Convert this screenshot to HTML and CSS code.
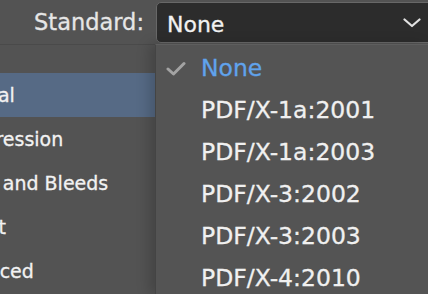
FILE: index.html
```html
<!DOCTYPE html>
<html lang="en">
<head>
    <meta charset="UTF-8">
    <meta name="viewport" content="width=device-width, initial-scale=1.0">
    <title>Export Adobe PDF</title>
    <link rel="stylesheet" href="styles.css">
</head>
<body>
    <header class="top-row">
        <label class="field-label" for="standard">Standard:</label>
        <div class="select" id="standard">
            <span class="select-value">None</span>
            <svg class="chevron" width="18" height="10" viewBox="0 0 18 10">
                <polyline points="1.5,1.5 9,8 16.5,1.5" fill="none" stroke="#e2e2e2" stroke-width="2.2" stroke-linecap="round" stroke-linejoin="round"/>
            </svg>
        </div>
    </header>

    <main class="content">
        <nav class="sidebar">
            <div class="side-item selected">General</div>
            <div class="side-item">Compression</div>
            <div class="side-item">Marks and Bleeds</div>
            <div class="side-item">Output</div>
            <div class="side-item">Advanced</div>
        </nav>
    </main>

    <!-- open dropdown of the Standard select -->
    <ul class="menu">
        <li class="menu-item checked">
            <span class="check">
                <svg width="20" height="15" viewBox="0 0 20 15">
                    <path d="M2 8 L7.5 13 L18 2.5" fill="none" stroke="#a3a3a3" stroke-width="3" stroke-linecap="round" stroke-linejoin="round"/>
                </svg>
            </span>
            None
        </li>
        <li class="menu-item"><span class="check"></span>PDF/X-1a:2001</li>
        <li class="menu-item"><span class="check"></span>PDF/X-1a:2003</li>
        <li class="menu-item"><span class="check"></span>PDF/X-3:2002</li>
        <li class="menu-item"><span class="check"></span>PDF/X-3:2003</li>
        <li class="menu-item"><span class="check"></span>PDF/X-4:2010</li>
    </ul>
</body>
</html>
```

FILE: styles.css
```css
body {
    margin: 0;
    height: 294px;
    overflow: hidden;
    position: relative;
    background-color: #535353;
    color: #eeeeee;
    font-family: "DejaVu Sans", sans-serif;
    -webkit-text-stroke: 0.3px currentColor;
}
.top-row {
    display: flex;
    align-items: flex-start;
    height: 44px;
    padding-top: 2px;
    box-sizing: border-box;
}
.field-label {
    width: 156px;
    flex-shrink: 0;
    box-sizing: border-box;
    padding-right: 12px;
    padding-top: 7px;
    text-align: right;
    font-size: 22.5px;
    color: #e6e6e6;
}
.select {
    flex: 1;
    height: 41px;
    margin-right: -8px;
    box-sizing: border-box;
    display: flex;
    align-items: center;
    justify-content: space-between;
    padding: 3px 14px 0 10px;
    background-color: #2c2c2c;
    border: 1px solid #686868;
    border-radius: 5px;
}
.select-value {
    font-size: 22px;
    color: #f2f2f2;
}
.chevron {
    margin-bottom: 2px;
}
.content {
    display: flex;
}
.sidebar {
    width: 216px;
    margin-left: -60px;
    padding-top: 28px;
    border-top: 1px solid #4a4a4a;
}
.side-item {
    height: 44px;
    line-height: 44px;
    font-size: 19px;
    color: #f2f2f2;
    white-space: nowrap;
}
.side-item.selected {
    background-color: #566a85;
}
.menu {
    position: absolute;
    left: 155px;
    top: 44px;
    right: 0;
    bottom: 0;
    margin: 0;
    padding: 2px 0 0 0;
    list-style: none;
    background-color: #545454;
    border-left: 1px solid #444444;
    border-top: 1px solid #5e5e5e;
    box-shadow: -6px 0 12px rgba(0, 0, 0, 0.18);
}
.menu-item {
    display: flex;
    align-items: center;
    height: 42px;
    font-size: 23.5px;
    color: #f0f0f0;
    white-space: nowrap;
}
.menu-item.checked {
    color: #60a3ec;
}
.check {
    width: 45px;
    flex-shrink: 0;
    box-sizing: border-box;
    padding-left: 10px;
    display: flex;
    align-items: center;
}
```
